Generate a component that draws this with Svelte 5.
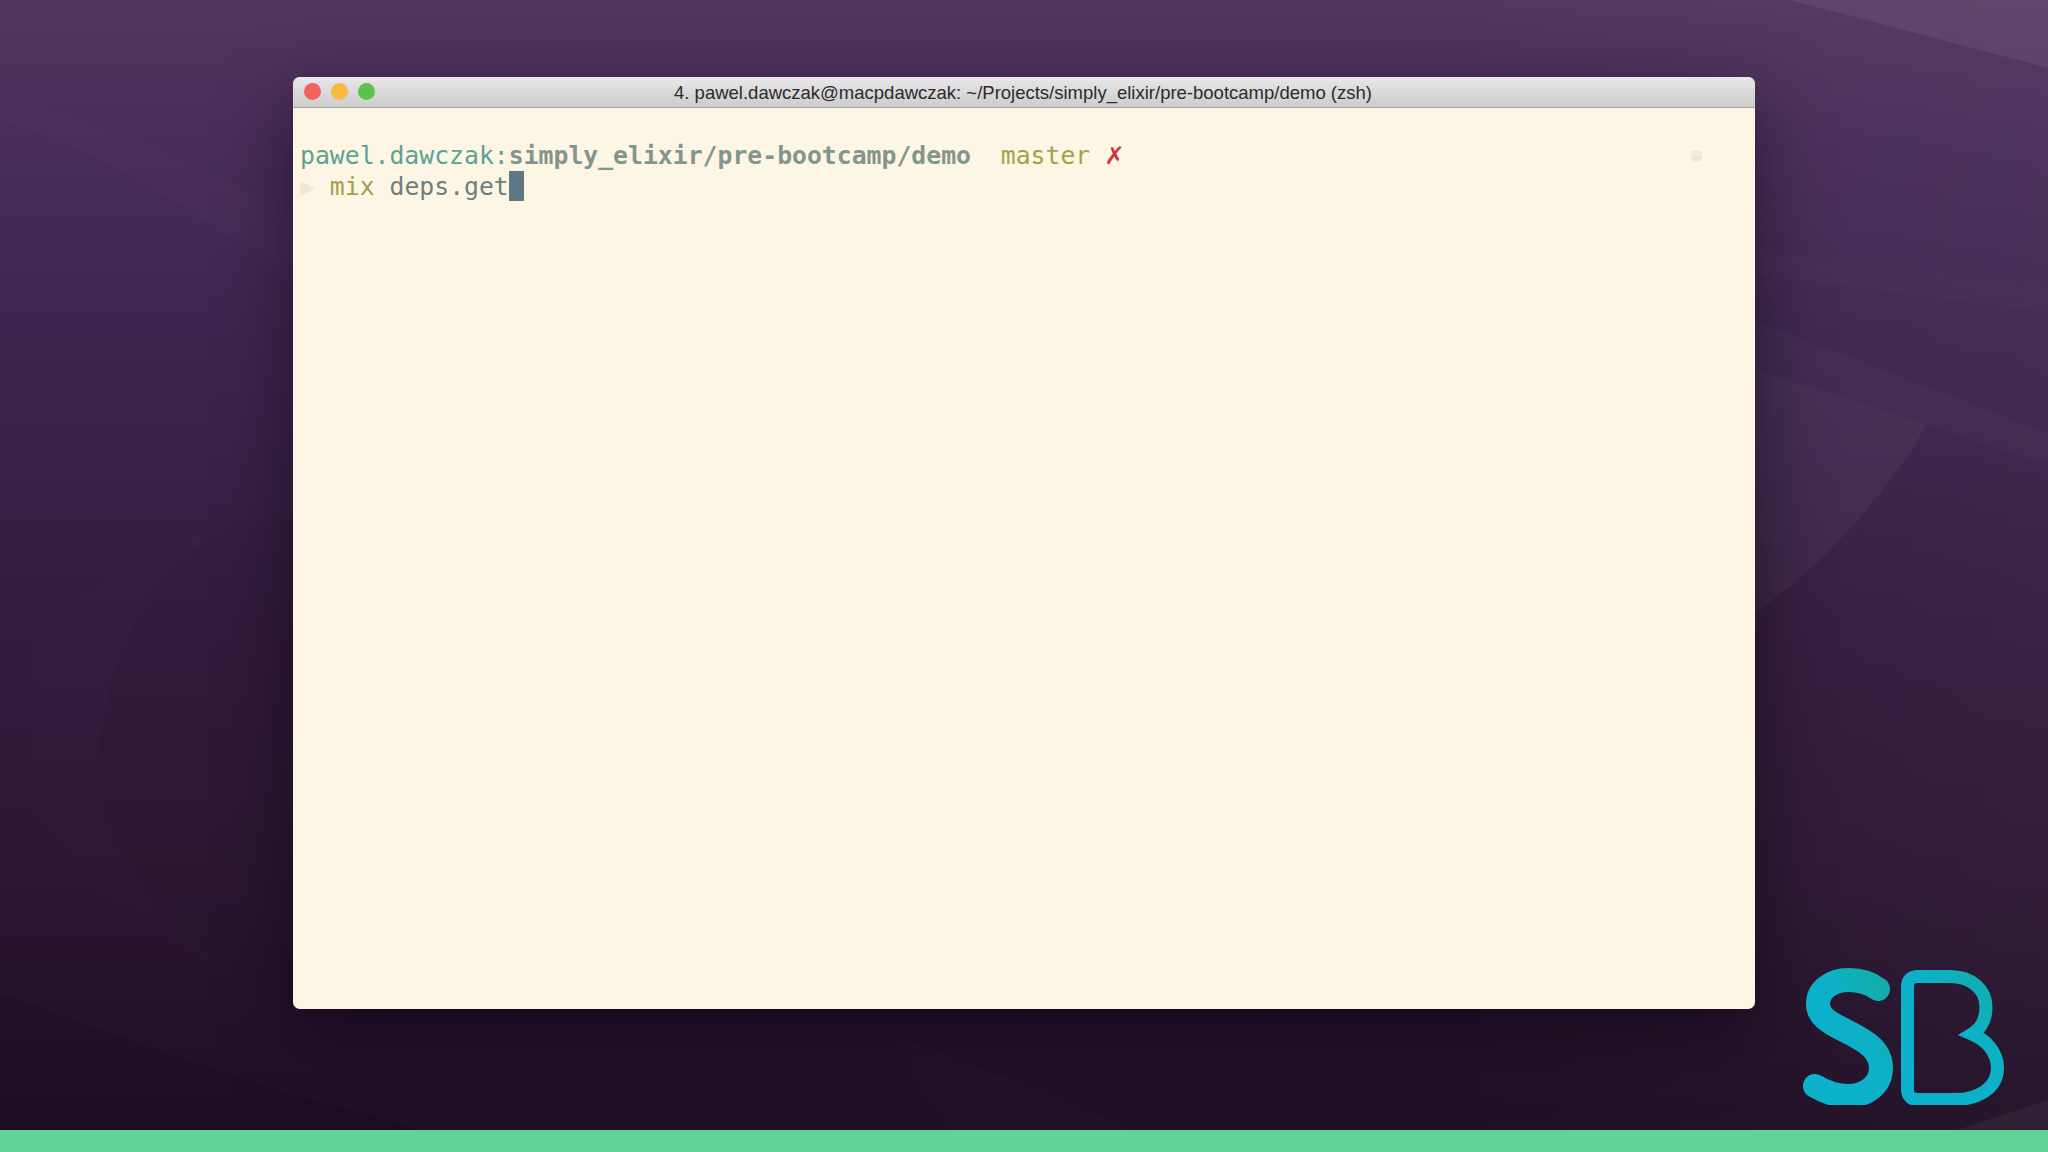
<script lang="ts">
  const title = "4. pawel.dawczak@macpdawczak: ~/Projects/simply_elixir/pre-bootcamp/demo (zsh)";
  const gap = "  ";
</script>

<div class="screen">
  <div class="stage">
    <svg class="wallpaper" viewBox="0 0 2048 1130" preserveAspectRatio="none" aria-hidden="true">
      <path d="M1790 0 L2048 68 V0 Z" fill="#fff" opacity="0.06" />
      <path d="M1755 250 L2048 285 V312 L1755 275 Z" fill="#fff" opacity="0.012" />
      <path d="M1755 321 L2048 433 V464 L1755 370 Z" fill="#fff" opacity="0.02" />
      <path d="M1755 370 L1927 424 C1890 490 1820 570 1755 612 Z" fill="#fff" opacity="0.04" />
      <path d="M0 96 C100 120 200 165 293 213 V280 C200 215 100 150 0 120 Z" fill="#fff" opacity="0.012" />
      <path d="M233 522 C170 545 90 590 33 618 V800 C60 880 180 950 293 1007 V522 Z" fill="#fff" opacity="0.008" />
      <path d="M233 522 C170 560 110 620 97 765 C100 860 180 950 293 1007 V522 Z" fill="#000" opacity="0.04" />
      <path d="M0 993 C100 1030 200 1065 293 1095 L420 1130 H0 Z" fill="#000" opacity="0.08" />
      <path d="M888 1032 C960 1060 1050 1095 1136 1130 H950 C925 1095 905 1060 888 1032 Z" fill="#fff" opacity="0.012" />
      <path d="M1957 1130 L2048 1100 V1130 Z" fill="#fff" opacity="0.05" />
    </svg>

    <section class="window">
      <header class="titlebar">
        <div class="lights">
          <span class="light red"></span>
          <span class="light yellow"></span>
          <span class="light green"></span>
        </div>
        <span class="title">{title}</span>
      </header>

      <div class="terminal">
        <svg class="rprompt" viewBox="0 0 14 14" aria-hidden="true">
          <path d="M2 5 C2 1 12 1 12 5 L12 9 C12 14 2 14 2 9 Z" fill="#efe7d6" />
          <path d="M2.5 5.5 H11.5" stroke="#fbf3e1" stroke-width="1.2" />
        </svg>
        <div class="line"><span class="user">pawel.dawczak:</span><span class="path">simply_elixir/pre-bootcamp/demo</span>{gap}<span class="branch">master</span>{" "}<span class="dirty">✗</span></div>
        <div class="line second"><span class="arrow">▶</span>{" "}<span class="cmd">mix</span>{" "}<span class="arg">deps.get</span><span class="cursor"></span></div>
      </div>
    </section>

    <svg class="logo" viewBox="0 0 210 145" aria-label="SB logo">
      <defs>
        <linearGradient id="sb" x1="0" y1="1" x2="1" y2="0">
          <stop offset="0" stop-color="#0cb1cc" />
          <stop offset="0.6" stop-color="#0cb1c8" />
          <stop offset="1" stop-color="#13ada9" />
        </linearGradient>
      </defs>
      <path
        d="M78 29 C70 23 60 20 49 20 C31 20 18 30 18 44 C18 56 28 62 44 70 C64 80 81 89 81 108 C81 125 66 136 48 136 C36 136 25 132 15 126"
        fill="none"
        stroke="url(#sb)"
        stroke-width="24"
        stroke-linecap="round"
      />
      <path
        d="M118 16.5 H150 C172 16.5 186 30 186 47 C186 58 182 68 172 74 C186 80 197.5 92 197.5 108 C197.5 128 178 139.5 155 139.5 H118 Q107.5 139.5 107.5 129 V27 Q107.5 16.5 118 16.5 Z"
        fill="none"
        stroke="url(#sb)"
        stroke-width="13"
        stroke-linejoin="miter"
        stroke-miterlimit="12"
      />
    </svg>
  </div>
  <div class="progress"></div>
</div>

<style>
  :global(body) {
    margin: 0;
    background: #1e0d22;
  }

  .screen {
    display: flex;
    flex-direction: column;
    width: 2048px;
    height: 1152px;
    overflow: hidden;
  }

  .stage {
    position: relative;
    flex: 1;
    padding: 77px 0 0 293px;
    background:
      linear-gradient(90deg, rgba(255, 255, 255, 0) 70%, rgba(255, 255, 255, 0.03) 100%),
      linear-gradient(180deg, #54355f 0%, #4a2d5a 12%, #3f2650 28%, #331b3e 55%, #2b1633 78%, #1f0e24 100%);
  }

  .wallpaper {
    position: absolute;
    inset: 0;
    width: 100%;
    height: 100%;
  }

  .window {
    position: relative;
    display: flex;
    flex-direction: column;
    width: 1462px;
    height: 932px;
    border-radius: 7px;
    overflow: hidden;
    background: #fef6e5;
    box-shadow: 0 24px 70px rgba(8, 2, 12, 0.5);
  }

  .titlebar {
    position: relative;
    display: flex;
    align-items: center;
    justify-content: center;
    height: 30px;
    background: linear-gradient(180deg, #e9e7e9 0%, #d8d7d8 60%, #cdcdcd 100%);
    border-bottom: 1px solid #a9a79e;
  }

  .lights {
    position: absolute;
    left: 11px;
    top: 6px;
    display: flex;
    gap: 10px;
  }

  .light {
    width: 17px;
    height: 17px;
    border-radius: 50%;
  }

  .red {
    background: #f1625c;
  }

  .yellow {
    background: #f7bb44;
  }

  .green {
    background: #5cc24f;
  }

  .title {
    margin: 2px 2px 0 0;
    font-family: "Liberation Sans", Arial, sans-serif;
    font-size: 18.5px;
    color: #2c2a2c;
    white-space: pre;
  }

  .terminal {
    position: relative;
    flex: 1;
    padding: 33px 0 0 7px;
    font-family: "DejaVu Sans Mono", monospace;
    font-size: 24.78px;
    line-height: 30px;
    color: #6f7f80;
  }

  .line {
    height: 30px;
    white-space: pre;
  }

  .second {
    line-height: 32px;
  }

  .user {
    color: #5aa396;
  }

  .path {
    font-weight: 700;
    color: #84958f;
  }

  .branch,
  .cmd {
    color: #a0a24f;
  }

  .dirty {
    font-weight: 700;
    font-size: 30px;
    line-height: 0;
    color: #cc3a41;
  }

  .arrow {
    color: #efe8d6;
  }

  .arg {
    color: #6f7f80;
  }

  .cursor {
    display: inline-block;
    width: 15px;
    height: 30px;
    vertical-align: top;
    background: #5f7885;
  }

  .rprompt {
    position: absolute;
    left: 1396px;
    top: 40px;
    width: 15px;
    height: 15px;
  }

  .logo {
    position: absolute;
    left: 1800px;
    top: 960px;
    width: 210px;
    height: 145px;
  }

  .progress {
    height: 22px;
    background: #63d297;
  }
</style>
